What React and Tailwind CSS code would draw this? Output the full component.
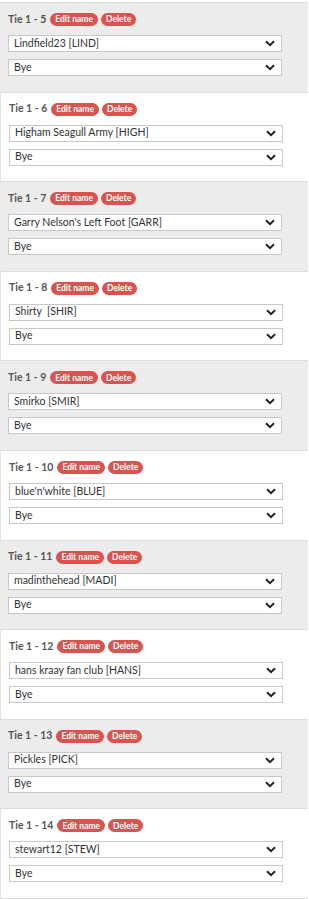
import React from "react";

const ties = [
  { n: 5, team: "Lindfield23 [LIND]" },
  { n: 6, team: "Higham Seagull Army [HIGH]" },
  { n: 7, team: "Garry Nelson's Left Foot [GARR]" },
  { n: 8, team: "Shirty  [SHIR]" },
  { n: 9, team: "Smirko [SMIR]" },
  { n: 10, team: "blue'n'white [BLUE]" },
  { n: 11, team: "madinthehead [MADI]" },
  { n: 12, team: "hans kraay fan club [HANS]" },
  { n: 13, team: "Pickles [PICK]" },
  { n: 14, team: "stewart12 [STEW]" },
];

const Chevron = () => (
  <svg width="10" height="7" viewBox="0 0 10 7" className="shrink-0">
    <path d="M1 1.2 L5 5.2 L9 1.2" fill="none" stroke="#222" strokeWidth="2" />
  </svg>
);

const FakeSelect = ({ value }) => (
  <div className="w-[274px] h-[17px] flex items-center justify-between bg-white border border-[#c8c8c8] pl-[5px] pr-[6px] text-[10.5px] text-[#333] whitespace-pre">
    <span>{value}</span>
    <Chevron />
  </div>
);

const TiePanel = ({ tie, shaded }) => (
  <div
    className={
      "h-[89.6px] border-t border-[#dcdcdc] pl-2 pt-[10px] " +
      (shaded ? "bg-[#ececec]" : "bg-white border-l border-l-[#e4e4e4]")
    }
  >
    <div className="flex items-center h-[13px] gap-[3px]">
      <span className="text-[10.5px] font-bold text-[#555] mr-[1px]">Tie 1 - {tie.n}</span>
      <button className="h-[13px] px-[5px] rounded-full bg-[#d9534f] text-white text-[8.5px] font-bold leading-none">
        Edit name
      </button>
      <button className="h-[13px] px-[5px] rounded-full bg-[#d9534f] text-white text-[8.5px] font-bold leading-none">
        Delete
      </button>
    </div>
    <div className="mt-[9px]">
      <FakeSelect value={tie.team} />
    </div>
    <div className="mt-[7px]">
      <FakeSelect value="Bye" />
    </div>
  </div>
);

export default function App() {
  return (
    <div className="w-[309px] h-[899px] bg-white overflow-hidden font-['Lato','Open_Sans',sans-serif]">
      <div className="h-[2px] bg-white" />
      <div className="w-[308px] border-b border-[#dcdcdc]">
        {ties.map((t, i) => (
          <TiePanel key={t.n} tie={t} shaded={i % 2 === 0} />
        ))}
      </div>
    </div>
  );
}
